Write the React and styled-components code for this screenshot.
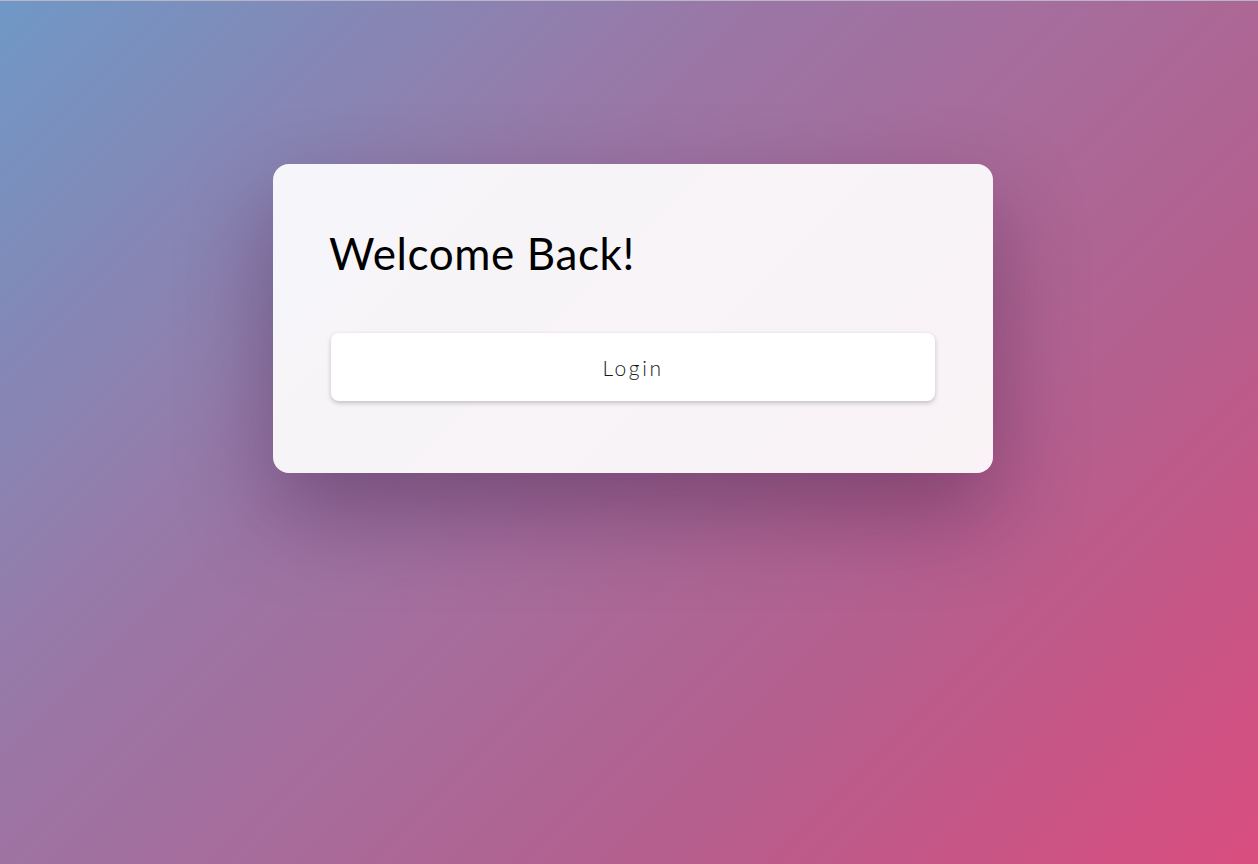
import React from 'react'
import styled, { createGlobalStyle } from 'styled-components'

const GlobalStyle = createGlobalStyle`
  html, body {
    margin: 0;
    padding: 0;
    height: 100%;
  }
  body {
    font-family: 'Lato', 'Liberation Sans', sans-serif;
  }
  #root {
    height: 100%;
  }
`

const Page = styled.div`
  box-sizing: border-box;
  height: 100%;
  display: flex;
  justify-content: center;
  align-items: flex-start;
  padding: 163px 0 0 8px;
  border-top: 1px solid #b9b4c6;
  background: linear-gradient(135deg, #6f98c6 0%, #9a77a6 35%, #b4608f 70%, #d84d7e 100%);
`

const Card = styled.div`
  box-sizing: border-box;
  width: 720px;
  padding: 65px 58px 72px;
  border-radius: 16px;
  background: rgba(255, 255, 255, 0.92);
  box-shadow: 0 40px 90px rgba(40, 10, 50, 0.35);
`

const Title = styled.h1`
  margin: 0 0 56px -2px;
  font-size: 44px;
  line-height: 48px;
  font-weight: 400;
  letter-spacing: 0.6px;
  color: #000;
`

const LoginButton = styled.button`
  display: block;
  width: 100%;
  height: 68px;
  border: none;
  border-radius: 8px;
  background: #fff;
  box-shadow: 0 2px 5px rgba(0, 0, 0, 0.22);
  font-family: inherit;
  font-size: 21px;
  font-weight: 300;
  letter-spacing: 2.6px;
  color: #1a1a1a;
  cursor: pointer;
`

export default function App() {
  return (
    <>
      <GlobalStyle />
      <Page>
        <Card>
          <Title>Welcome Back!</Title>
          <LoginButton>Login</LoginButton>
        </Card>
      </Page>
    </>
  )
}
